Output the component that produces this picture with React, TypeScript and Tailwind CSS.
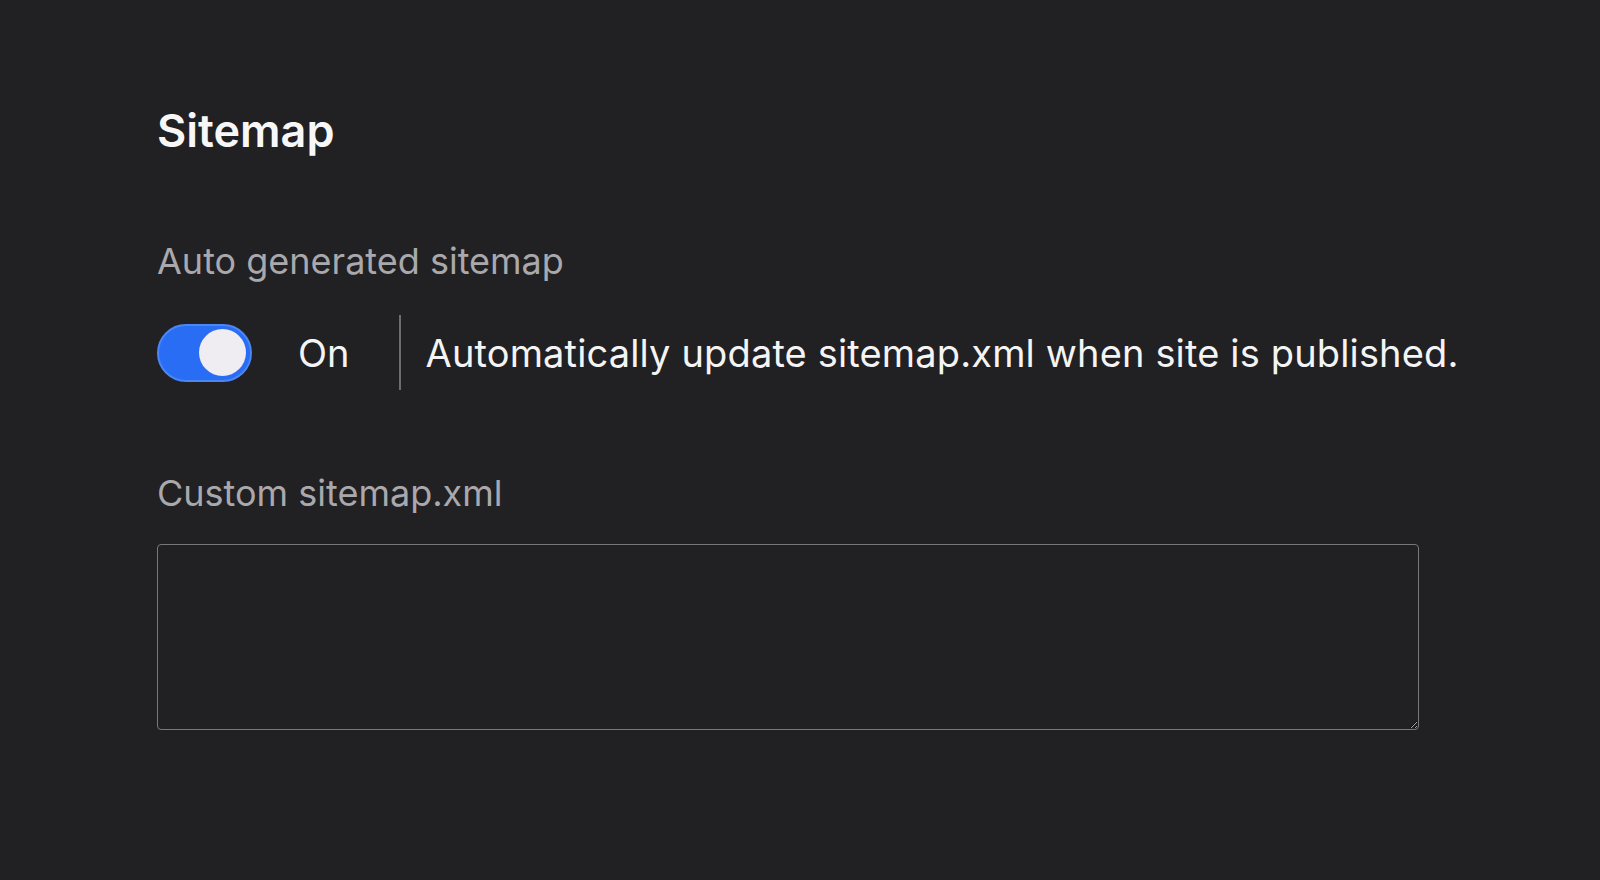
import React from "react";

export default function App() {
  return (
    <div
      className="min-h-screen w-full bg-[#212023] pl-[157px] pt-[108px]"
      style={{ fontFamily: "Inter, 'Noto Sans', sans-serif" }}
    >
      <h1 className="text-[45px] leading-none font-semibold text-[#f7f7f8]">Sitemap</h1>

      <div className="mt-[90px] text-[36px] leading-none text-[#a9a8ac]">Auto generated sitemap</div>

      <div className="mt-[36px] flex items-center">
        <div className="flex h-[58px] w-[95px] items-center justify-end rounded-full border-2 border-[#4b86f5] bg-[#2a6df5] pr-[4px]">
          <div className="h-[47px] w-[47px] rounded-full bg-[#efedf1]" />
        </div>
        <span className="ml-[46px] text-[38px] leading-none text-[#f4f4f5]">On</span>
        <div className="ml-[49px] h-[75px] w-[2px] bg-[#6d6c70]" />
        <span className="ml-[25px] text-[38px] leading-none tracking-[0.15px] text-[#f4f4f5]">
          Automatically update sitemap.xml when site is published.
        </span>
      </div>

      <div className="mt-[85px] text-[36px] leading-none text-[#a9a8ac]">Custom sitemap.xml</div>

      <textarea className="mt-[33px] block h-[186px] w-[1262px] rounded-[4px] border border-[#78777b] bg-transparent text-[#f4f4f5] outline-none" />
    </div>
  );
}
